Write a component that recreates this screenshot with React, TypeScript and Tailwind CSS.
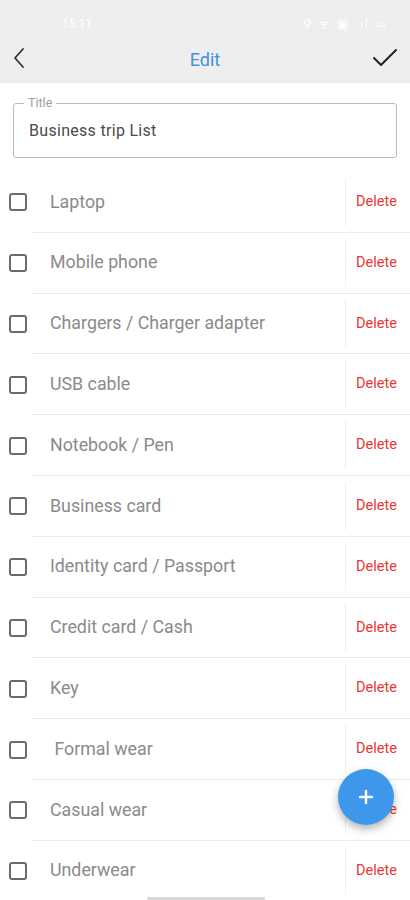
import React from "react";

const items = [
  "Laptop",
  "Mobile phone",
  "Chargers / Charger adapter",
  "USB cable",
  "Notebook / Pen",
  "Business card",
  "Identity card / Passport",
  "Credit card / Cash",
  "Key",
  " Formal wear",
  "Casual wear",
  "Underwear",
];

const Row = ({ label }: { label: string }) => (
  <div className="flex h-[60.8px] items-center">
    <div className="flex w-[32px] shrink-0 justify-center pl-[4px]">
      <div className="h-[18px] w-[18px] rounded-[3px] border-2 border-[#6b6b6b]" />
    </div>
    <div className="flex h-full flex-1 items-center border-b border-[#ececec]">
      <div className="flex-1 whitespace-pre pl-[18px] text-[17.8px] text-[#8a8a8a]">{label}</div>
      <div className="h-[48px] w-px bg-[#efefef]" />
      <div className="w-[64px] pl-[10px] text-[14.5px] text-[#e53935]">Delete</div>
    </div>
  </div>
);

export default function App() {
  return (
    <div className="relative h-[900px] w-[410px] overflow-hidden bg-white font-['Roboto',sans-serif]">
      <div className="bg-[#eeeeee]">
        <div className="flex h-[40px] items-center justify-between px-[62px] pr-[22px] pt-[8px] text-[12px] text-white">
          <span>15:11</span>
          <span className="tracking-[2px]">⚲ ᯤ ▣ .ıl ▭</span>
        </div>
        <div className="relative flex h-[43px] items-center justify-center pb-[4px]">
          <svg className="absolute left-[10px] top-[6px]" width="18" height="24" viewBox="0 0 18 24" fill="none">
            <path d="M13 3 L5 12 L13 21" stroke="#333" strokeWidth="1.8" strokeLinecap="round" strokeLinejoin="round" />
          </svg>
          <span className="text-[18px] text-[#3f92dc]">Edit</span>
          <svg className="absolute right-[12px] top-[7px]" width="26" height="22" viewBox="0 0 26 22" fill="none">
            <path d="M2 11 L9 18 L24 3" stroke="#222" strokeWidth="2" strokeLinecap="round" strokeLinejoin="round" />
          </svg>
        </div>
      </div>

      <div className="px-[13px] pt-[20px]">
        <div className="relative h-[55px] rounded-[3px] border border-[#bdbdbd]">
          <span className="absolute -top-[8px] left-[10px] bg-white px-[4px] text-[12.5px] leading-[14px] text-[#9e9e9e]">Title</span>
          <div className="flex h-full items-center pl-[15px] text-[16px] tracking-[0.3px] text-[#4a4a4a]">Business trip List</div>
        </div>
      </div>

      <div className="mt-[14px]">
        {items.map((it) => (
          <Row key={it} label={it} />
        ))}
      </div>

      <button className="absolute left-[338px] top-[769px] flex h-[56px] w-[56px] items-center justify-center rounded-full bg-[#3f97ec] shadow-[0_4px_8px_rgba(0,0,0,0.3)]">
        <svg width="16" height="16" viewBox="0 0 16 16">
          <path d="M8 2 V14 M2 8 H14" stroke="white" strokeWidth="2.4" strokeLinecap="round" />
        </svg>
      </button>

      <div className="absolute bottom-0 left-[147px] h-[3px] w-[118px] rounded-full bg-[#d6d6d6]" />
    </div>
  );
}
